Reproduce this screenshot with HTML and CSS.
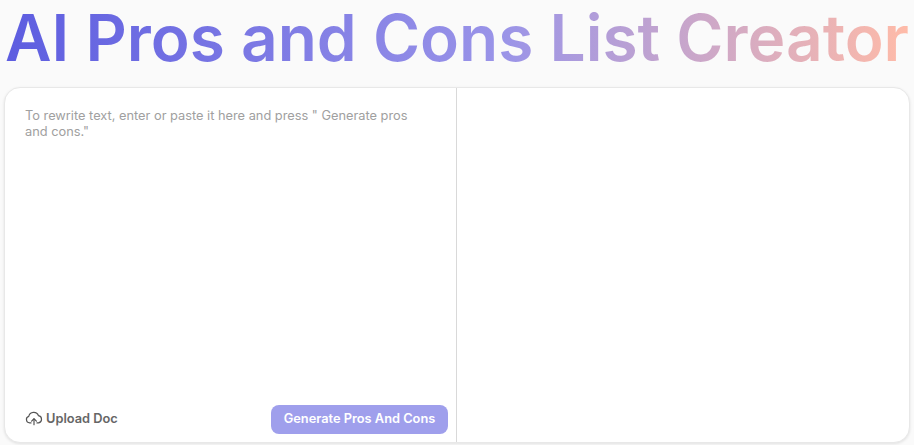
FILE: index.html
```html
<!DOCTYPE html>
<html lang="en">
<head>
<meta charset="utf-8">
<title>AI Pros and Cons List Creator</title>
<link rel="stylesheet" href="styles.css">
</head>
<body>
<main class="page">
  <h1 class="title">AI Pros and Cons List Creator</h1>
  <section class="card">
    <div class="pane pane-input">
      <p class="placeholder">To rewrite text, enter or paste it here and press " Generate pros and cons."</p>
      <div class="actions">
        <button class="upload" type="button">
          <svg class="upload-icon" viewBox="0 0 24 24" width="18" height="18" fill="none" stroke="#555" stroke-width="1.6" stroke-linecap="round" stroke-linejoin="round" aria-hidden="true">
            <path d="M8 18.5H6.2A4.4 4.4 0 0 1 5 9.9 6.8 6.8 0 0 1 18 8.9a4.9 4.9 0 0 1 .2 9.6H16"/>
            <path d="M12 21v-7.5"/>
            <path d="M8.8 16.2 12 13l3.2 3.2"/>
          </svg>
          <span>Upload Doc</span>
        </button>
        <button class="generate" type="button">Generate Pros And Cons</button>
      </div>
    </div>
    <div class="pane pane-output"></div>
  </section>
</main>
</body>
</html>
```
FILE: styles.css
```css
* { box-sizing: border-box; }
html, body { margin: 0; height: 100%; }
body {
  background: #fafafa;
  font-family: Inter, "Liberation Sans", sans-serif;
  overflow: hidden;
}
.page {
  width: 914px;
  height: 445px;
  padding: 0 4px 2px 4px;
  display: flex;
  flex-direction: column;
}
.title {
  margin: 0;
  height: 87px;
  font-size: 64px;
  line-height: 76px;
  font-weight: 600;
  text-align: center;
  white-space: nowrap;
  background: linear-gradient(90deg, #5d5de0 0%, #9a94e8 55%, #ffbba8 100%);
  -webkit-background-clip: text;
  background-clip: text;
  color: transparent;
}
.card {
  flex: 1;
  display: flex;
  background: #fff;
  border: 1px solid #e8e8e8;
  border-radius: 16px;
  box-shadow: 0 1px 3px rgba(0, 0, 0, 0.1);
  overflow: hidden;
}
.pane-input {
  width: 452px;
  border-right: 1px solid #d9d9d9;
  padding: 20px 8px 8px 20px;
  display: flex;
  flex-direction: column;
}
.pane-output { flex: 1; }
.placeholder {
  margin: 0;
  width: 390px;
  flex: 1;
  font-size: 12.8px;
  line-height: 16px;
  color: #a0a0a0;
}
.actions {
  display: flex;
  align-items: center;
  justify-content: space-between;
}
.upload {
  display: flex;
  align-items: center;
  gap: 3px;
  padding: 0 0 3px 0;
  border: 0;
  background: none;
  font: 600 12.8px Inter, "Liberation Sans", sans-serif;
  color: #666;
}
.generate {
  width: 177px;
  height: 29px;
  padding: 0 0 2px 0;
  border: 0;
  border-radius: 8px;
  background: #9f9fec;
  color: #fff;
  font: 600 12.8px Inter, "Liberation Sans", sans-serif;
}
```
